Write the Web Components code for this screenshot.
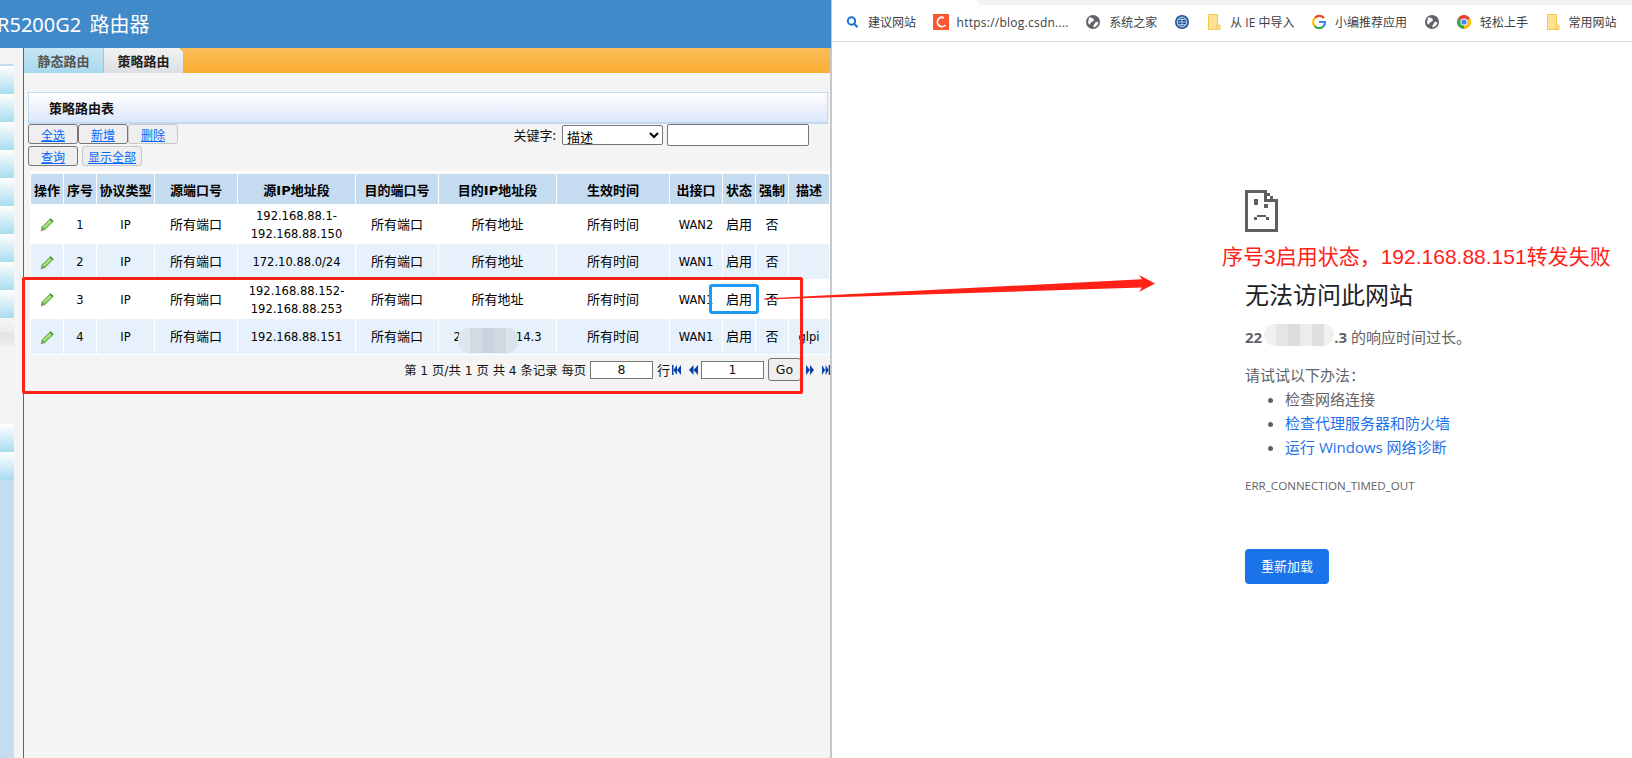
<!DOCTYPE html>
<html lang="zh">
<head>
<meta charset="utf-8">
<title>策略路由</title>
<style>
  html, body { margin: 0; height: 758px; overflow: hidden; background: #fff; }
  body { position: relative; font-family: "DejaVu Sans", "Noto Sans CJK SC", sans-serif; }
  .split { display: flex; height: 758px; }
</style>
</head>
<body>

<template id="router-pane">
  <style>
    :host { display: flex; flex-direction: column; width: 831px; height: 758px; flex: none; background: #f4f4f4; }
    .top { height: 48px; flex: none; background: #418ac9; color: #fff; overflow: hidden;
      font: 20px/50px "Noto Sans", "Noto Sans CJK SC", sans-serif; white-space: nowrap; word-spacing: 3px; }
    .top span { display: block; margin-left: -3px; }
    .body { flex: 1; display: flex; min-height: 0; }
    .main { flex: 1; border-left: 1px solid #1a73e0; border-right: 1px solid #c8c8c8; min-width: 0; display: flex; flex-direction: column; }
    .work { padding: 19px 0 0 4px; display: flex; flex-direction: column; }
  </style>
  <div class="top"><span>R5200G2 路由器</span></div>
  <div class="body">
    <side-nav></side-nav>
    <div class="main">
      <route-tabs></route-tabs>
      <div class="work"><slot></slot></div>
    </div>
  </div>
</template>

<template id="side-nav">
  <style>
    :host { display: flex; flex-direction: column; width: 23px; flex: none; padding-top: 16px; box-sizing: border-box; }
    div { width: 14px; flex: none; }
    .strip { height: 2px; background: #c5dcf0; }
    .item { height: 28px; background: linear-gradient(#fff, #a9dcf0); }
    .off { height: 28px; background: linear-gradient(#f5f5f5 0, #ececec 50%, #e2e4e6 50%, #ededee 100%); }
    .gap { height: 78px; }
    .rest { flex: 1; background: #c5dcf0; }
  </style>
  <div class="strip"></div>
  <div class="item"></div><div class="item"></div><div class="item"></div>
  <div class="item"></div><div class="item"></div><div class="item"></div>
  <div class="item"></div><div class="item"></div><div class="item"></div>
  <div class="off"></div>
  <div class="gap"></div>
  <div class="item"></div><div class="item"></div>
  <div class="rest"></div>
</template>

<template id="route-tabs">
  <style>
    :host { display: flex; height: 25px; flex: none; background: linear-gradient(#fbbc57, #f9ad33); }
    .tab { width: 79px; text-align: center; font: bold 13px/26px "Noto Sans CJK SC", sans-serif; box-sizing: border-box; }
    .a { background: linear-gradient(#c6e6f4, #a8d9ee); color: #555; }
    .b { margin-left: 1px; background: linear-gradient(#f1f2f3, #dcdfe3); color: #222; clip-path: polygon(0 0, 75px 0, 79px 4px, 79px 25px, 0 25px); }
  </style>
  <div class="tab a">静态路由</div>
  <div class="tab b">策略路由</div>
</template>

<template id="panel-title">
  <style>
    :host { display: block; width: 800px; height: 32px; box-sizing: border-box; border: 1px solid #c0d9ee; border-bottom-width: 2px;
      background: linear-gradient(#fff, #edf2fc 50%, #dbe8fa); font: bold 13px/30px "Noto Sans CJK SC", sans-serif; color: #111; padding-left: 20px; }
  </style>
  <slot></slot>
</template>

<template id="route-toolbar">
  <style>
    :host { display: flex; justify-content: space-between; height: 42px; width: 800px; font: 12px "Noto Sans CJK SC", sans-serif; }
    .left { display: flex; flex-direction: column; gap: 2px; }
    .row { display: flex; }
    .btn { width: 50px; height: 20px; box-sizing: border-box; border: 1px solid #767676; border-radius: 3px; background: #efefef;
      color: #0066ff; text-decoration: underline; text-align: center; line-height: 20px; }
    .off { border-color: #c8c8c8; }
    .wide { width: 60px; margin-left: 4px; }
    .right { display: flex; align-items: flex-start; padding-right: 19px; }
    label { font-size: 13px; line-height: 21px; color: #111; margin-right: 6px; }
    select { width: 101px; height: 20px; margin: 1px 4px 0 0; padding: 0; box-sizing: border-box; border: 1px solid #767676; border-radius: 2px; background: #fff; font: 13px "Noto Sans CJK SC", sans-serif; color: #000; }
    input { width: 142px; height: 22px; box-sizing: border-box; border: 1px solid #767676; border-radius: 2px; background: #fff; margin: 0; }
  </style>
  <div class="left">
    <div class="row"><div class="btn">全选</div><div class="btn">新增</div><div class="btn off">删除</div></div>
    <div class="row"><div class="btn">查询</div><div class="btn off wide">显示全部</div></div>
  </div>
  <div class="right">
    <label>关键字:</label>
    <select><option>描述</option></select>
    <input type="text">
  </div>
</template>

<template id="edit-pencil">
  <style>:host { display: inline-block; width: 14px; height: 14px; vertical-align: middle; } svg { display: block; }</style>
  <svg width="14" height="14" viewBox="0 0 14 14">
    <path d="M10.6 .6 13.3 3.2 4.4 12 1.6 9.5Z" fill="#6cc04a" stroke="#3f8a2c" stroke-width=".7"/>
    <path d="M10.2 1.6 12.4 3.6 4.4 10.6 2.8 9Z" fill="#a5e07a"/>
    <path d="M1.6 9.5 4.4 12 .6 13.4Z" fill="#8a8f6a"/>
    <path d="M10.6 .6 13.3 3.2 12.2 4.3 9.5 1.7Z" fill="#4d9c35"/>
  </svg>
</template>

<template id="route-table">
  <style>
    :host { display: block; width: 800px; margin: 5px 0 0 2px; padding: 3px 0 1px; background: #fff; box-sizing: border-box; }
    table { border-collapse: separate; border-spacing: 1px 0; table-layout: fixed; width: 800px; color: #000;
      font: 11.5px "DejaVu Sans", "Noto Sans CJK SC", sans-serif; }
    th, td { padding: 0; text-align: center; overflow: hidden; }
    th { height: 30px; background: #c5dbf0; font: bold 13px "DejaVu Sans", "Noto Sans CJK SC", sans-serif; }
    td { line-height: 18px; padding-top: 1px; box-sizing: border-box; }
    td.cjk { font-size: 13px; }
    tr.tall td { height: 40px; }
    tr.short td { height: 35px; }
    tr.alt td { background: #e6f1fb; }
    .hide { display: inline-block; width: 55px; }
  </style>
  <table>
    <colgroup></colgroup>
    <thead><tr></tr></thead>
    <tbody></tbody>
  </table>
</template>

<template id="route-pager">
  <style>
    :host { display: flex; justify-content: flex-end; align-items: center; width: 802px; height: 23px; margin-top: 3px; font: 13px "Noto Sans CJK SC", "DejaVu Sans", sans-serif; color: #111; white-space: nowrap; }
    .info { font-family: "DejaVu Sans", "Noto Sans CJK SC", sans-serif; font-size: 12.3px; margin-right: 4px; }
    .box { height: 18px; box-sizing: border-box; border: 1px solid #767676; background: #fff; text-align: center; line-height: 16px; width: 63px; font-family: "DejaVu Sans", sans-serif; font-size: 12.5px; }
    .row { margin: 0 2px 0 4px; }
    .go { width: 33px; height: 23px; box-sizing: border-box; border: 1px solid #767676; border-radius: 3px; background: #efefef; text-align: center; line-height: 21px; margin: 0 5px 0 4px; font-family: "DejaVu Sans", sans-serif; font-size: 12.5px; }
    svg { display: block; flex: none; }
    .a1 { margin-right: 8px; }
    .a2 { margin-right: 3px; }
    .a3 { margin-right: 8px; }
  </style>
  <span class="info">第 1 页/共 1 页 共 4 条记录 每页</span>
  <div class="box">8</div>
  <span class="row">行</span>
  <svg class="a1" width="9" height="10" viewBox="0 0 9 9" fill="#0b3fa8" preserveAspectRatio="none"><rect width="1.5" height="9"/><path d="M5 0V9L1.5 4.5ZM9 0V9L5 4.5Z"/></svg>
  <svg class="a2" width="9" height="10" viewBox="0 0 9 9" fill="#0b3fa8" preserveAspectRatio="none"><path d="M4.5 0V9L0 4.5ZM9 0V9L4.5 4.5Z"/></svg>
  <div class="box">1</div>
  <div class="go">Go</div>
  <svg class="a3" width="8" height="10" viewBox="0 0 9 9" fill="#0b3fa8" preserveAspectRatio="none"><path d="M0 0V9L4.5 4.5ZM4.5 0V9L9 4.5Z"/></svg>
  <svg width="8" height="10" viewBox="0 0 9 9" fill="#0b3fa8" preserveAspectRatio="none"><rect x="7.5" width="1.5" height="9"/><path d="M0 0V9L3.5 4.5ZM4 0V9L7.5 4.5Z"/></svg>
</template>

<template id="book-mark">
  <style>
    :host { display: flex; align-items: center; gap: 8px; color: #3c4043; font: 12px "Open Sans", "Noto Sans CJK SC", sans-serif; white-space: nowrap; }
    ::slotted(svg) { display: block; width: 16px; height: 16px; flex: none; }
  </style>
  <slot name="icon"></slot><slot></slot>
</template>

<template id="bookmark-bar">
  <style>
    :host { display: flex; align-items: center; gap: 16.5px; height: 42px; box-sizing: border-box; padding: 3px 0 0 12px; border-bottom: 1px solid #dadce0; background: #fff; position: relative; flex: none; }
    .edge { position: absolute; left: 145px; right: 0; top: 0; height: 5px; background: #f1f3f4; border-bottom-left-radius: 8px; }
  </style>
  <div class="edge"></div>
  <slot></slot>
</template>

<template id="error-page">
  <style>
    :host { display: block; padding: 148px 0 0 413px; color: #5f6368; font: 15px "Open Sans", "Noto Sans CJK SC", sans-serif; }
    svg { display: block; }
    h1 { font: 400 24px/32px "Open Sans", "Noto Sans CJK SC", sans-serif; color: #202124; margin: 47px 0 0; }
    p { margin: 0; line-height: 24px; }
    .host { margin-top: 14px; white-space: nowrap; }
    b { font-weight: 700; }
    .hide { display: inline-block; width: 72px; }
    .try { margin-top: 14px; }
    ul { margin: 0; padding: 0 0 0 40px; line-height: 24px; }
    li { height: 24px; }
    li::marker { color: #5f6368; }
    a { color: #1a73e8; }
    .code { font-size: 11.6px; line-height: 16px; margin-top: 19px; }
    .reload { margin-top: 55px; width: 84px; height: 35px; border-radius: 4px; background: #1a73e8; color: #fff; font-size: 13px; line-height: 35px; text-align: center; }
  </style>
  <svg width="33" height="42" viewBox="0 0 33 42" fill="#5f5f5f" shape-rendering="crispEdges">
    <path d="M0 0H22V3H3V39H30V12H33V42H0Z"/>
    <path d="M19 0H22V9H33V12H19Z"/>
    <path d="M22 3H25V6H22ZM25 6H28V9H25Z"/>
    <rect x="9" y="9" width="4" height="6"/>
    <rect x="19" y="14" width="4" height="4"/>
    <path d="M12 25H21V27H12ZM9 27H12V30H9ZM21 27H24V30H21Z"/>
  </svg>
  <h1>无法访问此网站</h1>
  <p class="host"><b>22</b><span class="hide"></span><b>.3</b> 的响应时间过长。</p>
  <p class="try">请试试以下办法：</p>
  <ul>
    <li>检查网络连接</li>
    <li><a>检查代理服务器和防火墙</a></li>
    <li><a>运行 Windows 网络诊断</a></li>
  </ul>
  <p class="code">ERR_CONNECTION_TIMED_OUT</p>
  <div class="reload">重新加载</div>
</template>

<template id="note-overlay">
  <style>
    :host { position: absolute; inset: 0; pointer-events: none; }
    .red { position: absolute; left: 22px; top: 277px; width: 781px; height: 117px; box-sizing: border-box; border: 3px solid #ff2116; border-radius: 2px; }
    .blue { position: absolute; left: 709px; top: 284px; width: 50px; height: 30px; box-sizing: border-box; border: 3px solid #1e9bf0; border-radius: 3px; }
    svg { position: absolute; left: 0; top: 0; }
    .text { position: absolute; left: 1222px; top: 242px; font: 21px/30px "Liberation Sans", "Noto Sans CJK SC", sans-serif; color: #ff2116; white-space: nowrap; }
    .blur { position: absolute; border-radius: 11px; }
    .b1 { left: 458px; top: 328px; width: 60px; height: 25px; background: linear-gradient(90deg, #dfe6ee 0 12px, #d2dae3 12px 24px, #c9d3dd 24px 36px, #d0d9e2 36px 48px, #dbe3eb 48px); }
    .b2 { left: 1264px; top: 324px; width: 70px; height: 22px; background: linear-gradient(90deg, #f1f1f2 0 12px, #e4e5e6 12px 24px, #dcddde 24px 36px, #ebecec 36px 48px, #dedfe0 48px 60px, #f0f0f1 60px); }
  </style>
  <div class="blur b1"></div>
  <div class="blur b2"></div>
  <div class="red"></div>
  <div class="blue"></div>
  <svg width="1632" height="758"><polygon points="764,298.6 1142,279.2 1139,275 1155,283.5 1139,292 1142,287.6 764,299.6" fill="#ff2116"/></svg>
  <div class="text">序号3启用状态，192.168.88.151转发失败</div>
</template>

<script>
  // every element just clones its own template into an open shadow root
  class TemplateElement extends HTMLElement {
    constructor() {
      super();
      const markup = document.querySelector('#' + this.localName);
      this.attachShadow({mode: 'open'}).appendChild(markup.content.cloneNode(true));
    }
  }

  class RouteTable extends TemplateElement {
    connectedCallback() {
      const widths = [32, 32, 57, 82, 117, 82, 117, 112, 52, 32, 32, 40];
      const heads = ['操作', '序号', '协议类型', '源端口号', '源IP地址段', '目的端口号', '目的IP地址段', '生效时间', '出接口', '状态', '强制', '描述'];
      const rows = [
        ['1', '192.168.88.1-<br>192.168.88.150', '所有地址', 'WAN2', ''],
        ['2', '172.10.88.0/24', '所有地址', 'WAN1', ''],
        ['3', '192.168.88.152-<br>192.168.88.253', '所有地址', 'WAN1', ''],
        ['4', '192.168.88.151', '2<span class="hide"></span>14.3', 'WAN1', 'glpi']
      ];
      const root = this.shadowRoot;
      root.querySelector('colgroup').innerHTML = widths.map(w => `<col style="width:${w}px">`).join('');
      root.querySelector('thead tr').innerHTML = heads.map(h => `<th>${h}</th>`).join('');
      root.querySelector('tbody').innerHTML = rows.map((r, i) => `
        <tr class="${i % 2 ? 'short alt' : 'tall'}">
          <td><edit-pencil></edit-pencil></td>
          <td>${r[0]}</td>
          <td>IP</td>
          <td class="cjk">所有端口</td>
          <td>${r[1]}</td>
          <td class="cjk">所有端口</td>
          <td class="${i == 3 ? '' : 'cjk'}">${r[2]}</td>
          <td class="cjk">所有时间</td>
          <td>${r[3]}</td>
          <td class="cjk">启用</td>
          <td class="cjk">否</td>
          <td>${r[4]}</td>
        </tr>`).join('');
    }
  }

  for (const name of ['router-pane', 'side-nav', 'route-tabs', 'panel-title', 'route-toolbar', 'edit-pencil', 'route-pager', 'book-mark', 'bookmark-bar', 'error-page', 'note-overlay']) {
    customElements.define(name, class extends TemplateElement {});
  }
  customElements.define('route-table', RouteTable);
</script>

<div class="split">
  <router-pane>
    <panel-title>策略路由表</panel-title>
    <route-toolbar></route-toolbar>
    <route-table></route-table>
    <route-pager></route-pager>
  </router-pane>
  <div style="flex:1;display:flex;flex-direction:column;min-width:0;border-left:1px solid #c8c8c8">
    <bookmark-bar>
      <book-mark><svg slot="icon" viewBox="0 0 16 16"><circle cx="7.5" cy="7" r="3.7" fill="none" stroke="#1a73d8" stroke-width="2"/><path d="M10.4 10 13.5 13.2" stroke="#1a73d8" stroke-width="2"/></svg>建议网站</book-mark>
      <book-mark style="letter-spacing:.25px"><svg slot="icon" viewBox="0 0 16 16"><rect width="16" height="16" fill="#fc5531"/><circle cx="9" cy="8" r="4.6" fill="none" stroke="#fff" stroke-width="1.8" stroke-dasharray="20 9" transform="rotate(40 9 8)"/></svg>https://blog.csdn....</book-mark>
      <book-mark><svg slot="icon" viewBox="0 0 16 16"><circle cx="8" cy="8" r="7" fill="#5f6368"/><path d="M4 3.5C7 3 10 5 8.5 7 6.5 8 5 8.5 5 11L3 9ZM11 7.5C10 10 8 10.5 8.5 13.5 11 13 13 11 13.5 8.5Z" fill="#fff"/></svg>系统之家</book-mark>
      <book-mark><svg slot="icon" viewBox="0 0 16 16"><circle cx="8" cy="8" r="7" fill="#1f4e96"/><circle cx="8" cy="8" r="4.8" fill="none" stroke="#a9cbe8" stroke-width="1.2"/><path d="M3.5 8H12.5M8 3.5V12.5M4.5 5.5H11.5M4.5 10.5H11.5" stroke="#cfe2f2" stroke-width=".8"/></svg></book-mark>
      <book-mark><svg slot="icon" viewBox="0 0 16 16"><path d="M2.5 .5H11.5V15.5H2.5Z" fill="#fde293" stroke="#f2c94c"/><path d="M11 11H14V15.5H11Z" fill="#fde293" stroke="#f2c94c"/></svg>从 IE 中导入</book-mark>
      <book-mark><svg slot="icon" viewBox="0 0 16 16" fill="none" stroke-width="2.2"><path d="M13 4A6 6 0 0 0 4 3.8" stroke="#ea4335"/><path d="M4 3.8A6 6 0 0 0 3.8 12.2" stroke="#fbbc05"/><path d="M3.8 12.2A6 6 0 0 0 12.5 12.2" stroke="#34a853"/><path d="M12.5 12.2A6 6 0 0 0 14 8H8" stroke="#4285f4"/></svg>小编推荐应用</book-mark>
      <book-mark><svg slot="icon" viewBox="0 0 16 16"><circle cx="8" cy="8" r="7" fill="#5f6368"/><path d="M4 3.5C7 3 10 5 8.5 7 6.5 8 5 8.5 5 11L3 9ZM11 7.5C10 10 8 10.5 8.5 13.5 11 13 13 11 13.5 8.5Z" fill="#fff"/></svg></book-mark>
      <book-mark><svg slot="icon" viewBox="0 0 16 16"><path d="M8 8 1.9 4.5A7 7 0 0 1 14.1 4.5Z" fill="#ea4335"/><path d="M8 8 14.1 4.5A7 7 0 0 1 8 15Z" fill="#fbbc05"/><path d="M8 8 8 15A7 7 0 0 1 1.9 4.5Z" fill="#34a853"/><circle cx="8" cy="8" r="3.5" fill="#fff"/><circle cx="8" cy="8" r="2.6" fill="#4285f4"/></svg>轻松上手</book-mark>
      <book-mark><svg slot="icon" viewBox="0 0 16 16"><path d="M2.5 .5H11.5V15.5H2.5Z" fill="#fde293" stroke="#f2c94c"/><path d="M11 11H14V15.5H11Z" fill="#fde293" stroke="#f2c94c"/></svg>常用网站</book-mark>
    </bookmark-bar>
    <error-page></error-page>
  </div>
</div>
<note-overlay></note-overlay>
</body>
</html>
